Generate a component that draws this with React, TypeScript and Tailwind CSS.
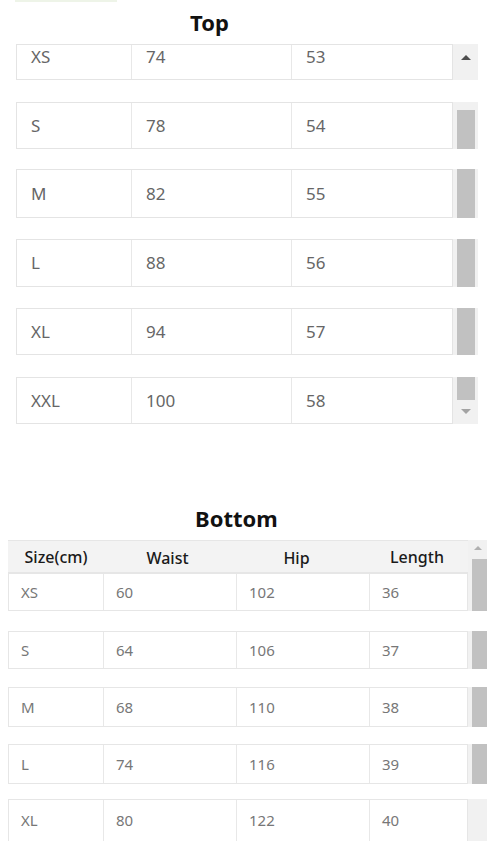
import React from "react";

const topRows = [
  { size: "XS", a: "74", b: "53", box: "h-[36px]", cell: "pb-[11px]", gap: "", bar: "up" },
  { size: "S", a: "78", b: "54", box: "h-[47px]", cell: "", gap: "mt-[22px]", bar: "thumbTop" },
  { size: "M", a: "82", b: "55", box: "h-[49px]", cell: "", gap: "mt-[20px]", bar: "thumb" },
  { size: "L", a: "88", b: "56", box: "h-[48px]", cell: "", gap: "mt-[21px]", bar: "thumb" },
  { size: "XL", a: "94", b: "57", box: "h-[47px]", cell: "", gap: "mt-[21px]", bar: "thumb" },
  { size: "XXL", a: "100", b: "58", box: "h-[47px]", cell: "", gap: "mt-[22px]", bar: "down" },
];

const bottomRows = [
  { size: "XS", w: "60", h: "102", l: "36", box: "h-[38px]", gap: "", bar: "thumb" },
  { size: "S", w: "64", h: "106", l: "37", box: "h-[38px]", gap: "mt-[20px]", bar: "thumb" },
  { size: "M", w: "68", h: "110", l: "38", box: "h-[40px]", gap: "mt-[18px]", bar: "thumb" },
  { size: "L", w: "74", h: "116", l: "39", box: "h-[40px]", gap: "mt-[17px]", bar: "thumb" },
  { size: "XL", w: "80", h: "122", l: "40", box: "h-[43px]", gap: "mt-[15px]", bar: "track" },
];

function TopBar({ kind }: { kind: string }) {
  if (kind === "up")
    return (
      <div className="w-[25px] bg-[#f1f1f1] flex justify-center pt-[11px]">
        <div className="w-0 h-0 border-l-[5px] border-r-[5px] border-b-[5px] border-l-transparent border-r-transparent border-b-[#4d4d4d]" />
      </div>
    );
  if (kind === "thumbTop")
    return (
      <div className="w-[25px] bg-[#f1f1f1] pt-[8px] pl-[4px] pr-[3px] flex">
        <div className="flex-1 bg-[#c1c1c1]" />
      </div>
    );
  if (kind === "down")
    return (
      <div className="w-[25px] bg-[#f1f1f1] flex flex-col">
        <div className="h-[23px] mr-[3px] ml-[4px] bg-[#c1c1c1]" />
        <div className="flex justify-center pt-[9px]">
          <div className="w-0 h-0 border-l-[5px] border-r-[5px] border-t-[5px] border-l-transparent border-r-transparent border-t-[#a3a3a3]" />
        </div>
      </div>
    );
  return (
    <div className="w-[25px] bg-[#f1f1f1] pl-[4px] pr-[3px] flex">
      <div className="flex-1 bg-[#c1c1c1]" />
    </div>
  );
}

export default function App() {
  return (
    <div className="w-[487px] h-[841px] overflow-hidden bg-white font-['Noto_Sans',sans-serif]">
      <div className="ml-[15px] h-[2px] w-[102px] bg-[#eef4e8]" />

      <h2 className="mt-[5px] ml-[190px] text-[22px] leading-[30px] font-bold text-[#111]">Top</h2>

      <div className="mt-[7px] ml-[16px] w-[462px] flex flex-col">
        {topRows.map((r) => (
          <div key={r.size} className={`flex ${r.gap}`}>
            <div className={`w-[437px] flex border border-[#e4e4e4] text-[17px] text-[#666] bg-white ${r.box}`}>
              <div className={`w-[115px] flex items-center pl-[14px] border-r border-[#e8e8e8] ${r.cell}`}>{r.size}</div>
              <div className={`w-[160px] flex items-center pl-[14px] border-r border-[#e8e8e8] ${r.cell}`}>{r.a}</div>
              <div className={`flex-1 flex items-center pl-[14px] ${r.cell}`}>{r.b}</div>
            </div>
            <TopBar kind={r.bar} />
          </div>
        ))}
      </div>

      <h2 className="mt-[79px] ml-[195px] text-[22px] leading-[30px] font-bold text-[#111]">Bottom</h2>

      <div className="mt-[7px] ml-[8px] w-[479px] flex flex-col">
        <div className="flex">
          <div className="w-[460px] h-[33px] flex items-center bg-[#f3f3f3] border-t border-b border-[#e6e6e6] text-[16px] font-medium text-[#1a1a1a]">
            <div className="w-[96px] text-center">Size(cm)</div>
            <div className="w-[133px] text-center pt-[3px] pr-[6px]">Waist</div>
            <div className="w-[133px] text-center pt-[3px] pr-[14px]">Hip</div>
            <div className="flex-1 text-center pr-[4px]">Length</div>
          </div>
          <div className="flex-1 bg-[#f1f1f1] flex flex-col">
            <div className="flex justify-center pt-[6px] h-[19px]">
              <div className="w-0 h-0 border-l-[4px] border-r-[4px] border-b-[4px] border-l-transparent border-r-transparent border-b-[#b0b0b0]" />
            </div>
            <div className="flex-1 ml-[4px] bg-[#c1c1c1]" />
          </div>
        </div>
        {bottomRows.map((r) => (
          <div key={r.size} className={`flex ${r.gap}`}>
            <div className={`w-[460px] flex border border-[#e6e6e6] text-[15px] text-[#777] bg-white ${r.box}`}>
              <div className="w-[95px] flex items-center pl-[12px] border-r border-[#e8e8e8]">{r.size}</div>
              <div className="w-[133px] flex items-center pl-[12px] border-r border-[#e8e8e8]">{r.w}</div>
              <div className="w-[133px] flex items-center pl-[12px] border-r border-[#e8e8e8]">{r.h}</div>
              <div className="flex-1 flex items-center pl-[12px]">{r.l}</div>
            </div>
            <div className="flex-1 bg-[#f1f1f1] flex">
              {r.bar === "thumb" ? <div className="flex-1 ml-[4px] bg-[#c1c1c1]" /> : null}
            </div>
          </div>
        ))}
      </div>
    </div>
  );
}
